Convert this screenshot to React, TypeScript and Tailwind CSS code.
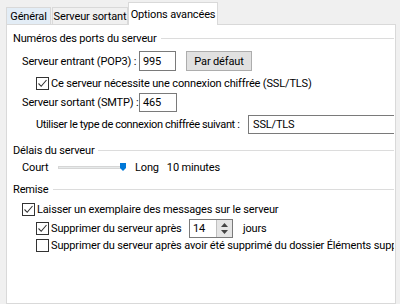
import React from 'react';

const FONT = "font-['Roboto','Liberation_Sans',sans-serif]";

function Check({ checked }: { checked: boolean }) {
  return (
    <span className="w-[13px] h-[13px] border border-[#333333] bg-white flex items-center justify-center shrink-0">
      {checked && (
        <svg width="11" height="11" viewBox="0 0 11 11">
          <path d="M1.5 5.5 L4.2 8.3 L9.5 2" fill="none" stroke="#333333" strokeWidth="1.1" />
        </svg>
      )}
    </span>
  );
}

function GroupTitle({ label, h }: { label: string; h: string }) {
  return (
    <div className={`flex items-center ${h}`}>
      <span className="pr-[4px]">{label}</span>
      <div className="flex-1 h-px bg-[#dcdcdc]" />
    </div>
  );
}

export default function App() {
  return (
    <div className={`${FONT} w-[400px] h-[304px] bg-[#f0f0f0] text-[11px] tracking-[-0.15px] text-black overflow-hidden leading-none whitespace-nowrap`}>
      {/* tabs */}
      <div className="flex items-end h-[24px] pl-[6px]">
        <div className="h-[17px] w-[45px] bg-[#e3edf6] border border-b-0 border-[#d9d9d9] flex items-center justify-center">
          Général
        </div>
        <div className="h-[17px] w-[76px] ml-[1px] bg-[#f0f0f0] border border-b-0 border-[#d9d9d9] flex items-center justify-center">
          Serveur sortant
        </div>
        <div className="h-[23px] w-[90px] bg-white border border-b-0 border-[#d9d9d9] flex items-center justify-center relative top-px z-10">
          Options avancées
        </div>
      </div>

      {/* panel */}
      <div className="ml-[6px] w-[390px] h-[280px] bg-white border border-[#d9d9d9] pt-[3px] pl-[6px] pr-[1px]">
        <GroupTitle label="Numéros des ports du serveur" h="h-[20px]" />

        <div className="flex items-center h-[20px] mt-[3px] pl-[9px]">
          <span className="w-[117px]">Serveur entrant (POP3) :</span>
          <div className="w-[37px] h-[20px] border border-[#7a7a7a] flex items-center pl-[3px]">995</div>
          <div className="ml-[10px] w-[66px] h-[20px] bg-[#e1e1e1] border border-[#adadad] flex items-center justify-center">
            Par défaut
          </div>
        </div>

        <div className="flex items-center h-[18px] mt-[3px] pl-[23px] gap-[2px]">
          <Check checked />
          <span>Ce serveur nécessite une connexion chiffrée (SSL/TLS)</span>
        </div>

        <div className="flex items-center h-[20px] pl-[9px]">
          <span className="w-[117px]">Serveur sortant (SMTP) :</span>
          <div className="w-[38px] h-[19px] border border-[#7a7a7a] flex items-center pl-[3px]">465</div>
        </div>

        <div className="flex items-center h-[20px] mt-[2px] pl-[23px]">
          <span className="w-[212px] tracking-[-0.35px]">Utiliser le type de connexion chiffrée suivant :</span>
          <div className="flex-1 h-[19px] border border-[#7a7a7a] border-r-0 flex items-center pl-[4px]">SSL/TLS</div>
        </div>

        <GroupTitle label="Délais du serveur" h="h-[18px] mt-[7px]" />

        <div className="flex items-center h-[16px] pl-[9px]">
          <span className="w-[36px]">Court</span>
          <div className="relative w-[68px] h-[8px] flex items-center">
            <div className="w-[63px] h-[3px] bg-[#e7eaea] border border-[#d6d6d6]" />
            <svg className="absolute left-[62px] top-0" width="6" height="8" viewBox="0 0 6 8">
              <path d="M0 0 H6 V5 L3 8 L0 5 Z" fill="#0078d7" />
            </svg>
          </div>
          <span className="ml-[9px]">Long</span>
          <span className="ml-[8px]">10 minutes</span>
        </div>

        <GroupTitle label="Remise" h="h-[18px] mt-[5px]" />

        <div className="flex items-center h-[18px] mt-[2px] pl-[9px] gap-[2px]">
          <Check checked />
          <span>Laisser un exemplaire des messages sur le serveur</span>
        </div>

        <div className="flex items-center h-[20px] pl-[23px] gap-[2px]">
          <Check checked />
          <span className="w-[136px]">Supprimer du serveur après</span>
          <div className="w-[44px] h-[19px] border border-[#7a7a7a] flex items-center">
            <span className="flex-1 pl-[3px]">14</span>
            <div className="w-[16px] h-[17px] bg-[#e5e5e5] border-l border-[#c0c0c0] flex flex-col items-center justify-center gap-[3px]">
              <svg width="7" height="4" viewBox="0 0 7 4"><path d="M0 4 L3.5 0 L7 4 Z" fill="#444" /></svg>
              <svg width="7" height="4" viewBox="0 0 7 4"><path d="M0 0 L3.5 4 L7 0 Z" fill="#444" /></svg>
            </div>
          </div>
          <span className="ml-[8px]">jours</span>
        </div>

        <div className="flex items-center h-[14px] pl-[23px] gap-[2px] overflow-hidden">
          <Check checked={false} />
          <span>Supprimer du serveur après avoir été supprimé du dossier Éléments supprimés</span>
        </div>
      </div>
    </div>
  );
}
